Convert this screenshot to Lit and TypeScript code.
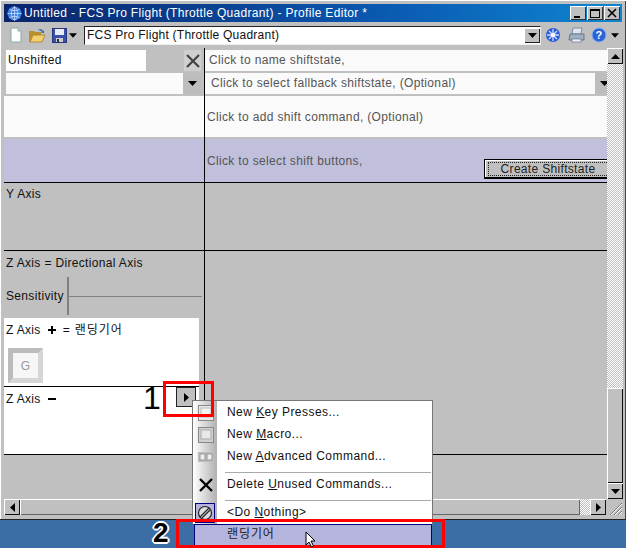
import { LitElement, html, css } from "lit";
import { customElement } from "lit/decorators.js";

const arrowDown = html`<svg width="9" height="5" viewBox="0 0 9 5"><path d="M0 0h9L4.500 5z" fill="#000"/></svg>`;
const arrowUp = html`<svg width="9" height="5" viewBox="0 0 9 5"><path d="M0 5h9L4.500 0z" fill="#000"/></svg>`;
const arrowRight = html`<svg width="5" height="9" viewBox="0 0 5 9"><path d="M0 0v9L5 4.500z" fill="#000"/></svg>`;
const arrowLeft = html`<svg width="5" height="9" viewBox="0 0 5 9"><path d="M5 0v9L0 4.500z" fill="#000"/></svg>`;
const cross = html`<svg width="14" height="14" viewBox="0 0 14 14"><path d="M1 1l12 12M13 1L1 13" stroke="#444" stroke-width="2.200" fill="none"/></svg>`;

@customElement("app-root")
export class AppRoot extends LitElement {
  static styles = css`
    :host { display: block; position: relative; width: 626px; height: 548px; overflow: hidden; background: #3a6ea5;
      font: 12px/14px "Liberation Sans", "Noto Sans CJK KR", sans-serif; letter-spacing: .34px; color: #111; }
    .window { box-sizing: border-box; height: 520px; background: #c0c0c0; padding: 4px 4px 4px 4px;
      border-bottom: 1px solid #222; box-shadow: inset 1px 1px 0 #fff, inset -1px 0 0 #444, inset -3px -1px 0 #c0c0c0; display: flex; flex-direction: column; }
    .title { height: 18px; flex: none; display: flex; align-items: center; background: linear-gradient(90deg, #0a246a, #0a58b0 60%, #0f85d0); color: #fff; letter-spacing: .32px; padding: 0 2px 0 3px; gap: 2px; }
    .title .name { flex: 1; }
    .wbtns { display: flex; gap: 1px; }
    .wbtn { width: 16px; height: 14px; background: #c0c0c0; box-shadow: inset 1px 1px 0 #fff, inset -1px -1px 0 #333; display: flex; align-items: center; justify-content: center; }
    .toolbar { height: 26px; flex: none; display: flex; align-items: center; padding-left: 3px; }
    .tool { width: 18px; height: 18px; display: flex; align-items: center; justify-content: center; flex: none; }
    .t2 { margin-left: 3px; }
    .t3 { margin-left: 4px; }
    .t5 { margin-left: 5px; }
    .dd { width: 8px; margin-right: 3px; display: flex; justify-content: center; flex: none; margin-left: 1px; }
    .dd.last { margin-left: 3px; }
    .combo { box-sizing: border-box; width: 457px; height: 19px; background: #fff; border: 1px solid; border-color: #222 #eee #eee #222; display: flex; align-items: center; letter-spacing: .24px; padding-left: 2px; flex: none; margin-right: 3px; margin-left: 4px; }
    .combo span { flex: 1; }
    .combo .cbtn { width: 16px; height: 15px; background: #c0c0c0; box-shadow: inset 1px 1px 0 #fff, inset -1px -1px 0 #222; display: flex; align-items: center; justify-content: center; }
    .main { flex: 1; display: flex; min-height: 0; }
    .panes { width: 603px; flex: none; display: flex; flex-direction: column; }
    .grid { flex: 1; display: grid; grid-template-columns: 201px 1fr; min-height: 0; }
    .left { border-right: 1px solid #000; display: flex; flex-direction: column; }
    .right { display: flex; flex-direction: column; overflow: hidden; }
    .r1 { height: 23px; display: flex; align-items: flex-end; box-sizing: border-box; flex: none; }
    .inp { width: 140px; height: 21px; margin-left: 2px; background: #fff; display: flex; align-items: center; padding: 0 0 2px 2px; box-sizing: border-box; }
    .xbtn { margin-left: 38px; width: 17px; height: 21px; display: flex; align-items: center; justify-content: center; background: #cfcfcf; }
    .r2 { height: 21px; margin-top: 2px; margin-left: 2px; background: #fafafa; display: flex; justify-content: flex-end; width: 195px; flex: none; }
    .sel { width: 18px; height: 21px; background: #bdbdbd; display: flex; align-items: center; justify-content: center; flex: none; }
    .r3 { height: 41px; margin-top: 2px; background: #fafafa; flex: none; }
    .r4 { height: 43px; margin-top: 2px; background: #c0c0dc; border-bottom: 1px solid #000; flex: none; }
    .yaxis { height: 68px; border-bottom: 1px solid #000; padding: 4px 2px; box-sizing: border-box; flex: none; }
    .zaxis { flex: none; padding: 5px 2px 0; height: 67px; box-sizing: border-box; }
    .sens { display: flex; align-items: center; height: 38px; margin-top: 7px; }
    .sens i { width: 2px; height: 38px; background: #808080; margin-left: 3px; flex: none; }
    .sens b { height: 1px; width: 133px; background: #808080; }
    .card { background: #fff; width: 195px; box-sizing: border-box; padding: 5px 2px; flex: none; }
    .c1 { height: 69px; border-bottom: 1px solid #000; }
    .c2 { height: 67px; position: relative; }
    .axis { display: flex; align-items: center; gap: 6px; }
    .ko { letter-spacing: .9px; }
    .key { width: 35px; height: 35px; margin-top: 11px; box-sizing: border-box; margin-left: 2px; border: 5px solid; border-color: #bcbcbc #d6d6d6 #d6d6d6 #bcbcbc; background: #f6f6f6; color: #999; display: flex; align-items: center; justify-content: center; }
    .rowline { height: 1px; background: #000; flex: none; }
    .rest { flex: 1; }
    .rtext { color: #555; padding-left: 2px; display: flex; align-items: center; box-sizing: border-box; flex: none; }
    .rr1 { height: 21px; margin-top: 2px; background: #fafafa; padding: 0 0 2px 4px; }
    .rr2 { height: 21px; margin-top: 2px; background: #fafafa; padding: 0 0 0 6px; justify-content: space-between; }
    .rr2 span { padding-bottom: 2px; }
    .rr2 .sel { margin-right: -6px; }
    .rr3 { height: 41px; margin-top: 2px; background: #fafafa; }
    .rr4 { height: 44px; margin-top: 2px; background: #c0c0dc; border-bottom: 1px solid #000; position: relative; }
    .create { position: absolute; left: 279px; top: 20px; width: 123px; height: 20px; box-sizing: border-box; background: #c0c0c0; border: 1px solid #000; border-bottom-width: 2px; border-right: 0; box-shadow: inset 1px 1px 0 #fff; color: #222; display: flex; align-items: center; justify-content: flex-start; padding-left: 3px; letter-spacing: .32px; }
    .create span { box-sizing: border-box; width: 122px; border: 1px dotted #222; border-right: 0; text-align: center; line-height: 12px; }
    .ry { height: 67px; border-bottom: 1px solid #000; flex: none; }
    .rz { flex: none; height: 203px; border-bottom: 1px solid #000; }
    .vscroll { width: 16px; flex: none; display: flex; flex-direction: column; }
    .sb { width: 16px; height: 16px; flex: none; background: #c0c0c0; box-sizing: border-box; box-shadow: inset 1px 1px 0 #fff, inset -1px -1px 0 #111; display: flex; align-items: center; justify-content: center; }
    .check { background: repeating-conic-gradient(#fff 0 25%, #c0c0c0 0 50%) 0 0 / 2px 2px; }
    .vtrack { height: 324px; flex: none; }
    .vthumb { flex: 1; box-shadow: inset 1px 1px 0 #fff, inset -1px -1px 0 #111; background: #c0c0c0; }
    .hscroll { height: 16px; flex: none; display: flex; }
    .hthumb { flex: 1; box-shadow: inset 1px 1px 0 #fff, inset -1px -1px 0 #666; background: #c0c0c0; }
    .htrack { width: 10px; }
    .grip { width: 16px; display: flex; align-items: flex-end; justify-content: flex-end; flex: none; }
    .menu { position: absolute; left: 192px; top: 400px; width: 241px; height: 124px; box-sizing: border-box; background: #fff; border: 1px solid #777; border-bottom: 0; z-index: 2; }
    .gut { position: absolute; left: 0; top: 0; bottom: 0; width: 24px; background: linear-gradient(90deg, #fff, #b0b0b0); }
    .mi { position: absolute; left: 34px; white-space: pre; color: #111; letter-spacing: .45px; }
    .mi u { text-underline-offset: 1px; }
    .msep { position: absolute; left: 32px; right: 1px; height: 1px; background: #aaa; }
    .mic { position: absolute; left: 3px; width: 20px; height: 20px; display: flex; align-items: center; justify-content: center; }
    .mic.sel2 { left: 2px; box-sizing: border-box; border: 1px solid #000080; background: #b4b4dc; }
    .hl { position: absolute; left: 194px; top: 524px; width: 238px; height: 22px; box-sizing: border-box; background: #b4b4dc; border: 1px solid #000080; padding: 2px 0 0 32px; z-index: 2; color: #222; letter-spacing: .9px; }
    .redbox { position: absolute; box-sizing: border-box; border: 3px solid #f00; z-index: 3; }
    .num { position: absolute; z-index: 3; font-family: "Liberation Sans", sans-serif; font-size: 32px; line-height: 26px; letter-spacing: 0; color: #000; }
    .num.two { font-weight: 700; font-size: 28px; text-shadow: 2px 0 #fff, -2px 0 #fff, 0 2px #fff, 0 -2px #fff, 1px 1px #fff, -1px -1px #fff, 1px -1px #fff, -1px 1px #fff; }
    .arrowbtn { position: absolute; left: 176px; top: 387px; width: 20px; height: 20px; box-sizing: border-box; background: #c0c0c0; border: 1px solid #222; display: flex; align-items: center; justify-content: center; z-index: 1; }
    .cursor { position: absolute; left: 305px; top: 531px; z-index: 4; }
  `;

  private globe() {
    return html`<svg width="15" height="15" viewBox="0 0 16 16"><circle cx="8" cy="8" r="7.500" fill="#3a80e0"/><path d="M8 .5v15M.5 8h15M2.500 3.500c3.500 2 7.500 2 11 0M2.500 12.500c3.500-2 7.500-2 11 0M8 .5c-4.500 3.500-4.500 11.500 0 15M8 .5c4.500 3.500 4.500 11.500 0 15" stroke="#cfe0ff" stroke-width=".8" fill="none"/></svg>`;
  }

  render() {
    return html`
      <div class="window">
        <div class="title">
          ${this.globe()}
          <span class="name">Untitled - FCS Pro Flight (Throttle Quadrant) - Profile Editor *</span>
          <div class="wbtns">
            <div class="wbtn"><svg width="10" height="10"><rect x="1" y="8" width="6" height="2" fill="#000"/></svg></div>
            <div class="wbtn"><svg width="10" height="10"><rect x=".5" y="1.500" width="9" height="8" fill="none" stroke="#000"/><rect y="1" width="10" height="2" fill="#000"/></svg></div>
            <div class="wbtn"><svg width="10" height="10"><path d="M1 1l8 8M9 1L1 9" stroke="#000" stroke-width="1.600"/></svg></div>
          </div>
        </div>
        <div class="toolbar">
          <div class="tool"><svg width="14" height="16" viewBox="0 0 14 16"><path d="M2 1h7l3 3v11H2z" fill="#fff" stroke="#8aa" /><path d="M9 1v3h3" fill="#dde" stroke="#8aa"/></svg></div>
          <div class="tool t2"><svg width="18" height="15" viewBox="0 0 18 15"><path d="M1 3h5l1 1h6v3H5l-3 7H1z" fill="#b8902c"/><path d="M2 14l3-7h12l-3 7z" fill="#f0d070" stroke="#a88020" stroke-width=".8"/><path d="M10 2c2-2 4-1 5 1l1-1v3h-3l1-1c-1-1-2-2-4-2" fill="#3a70c0"/></svg></div>
          <div class="tool t3"><svg width="15" height="15" viewBox="0 0 15 15"><rect x=".5" y=".5" width="14" height="14" fill="#3a50a8" stroke="#26367c"/><rect x="3" y="1" width="9" height="6" fill="#e8ecf8"/><rect x="4" y="10" width="7" height="4" fill="#ccc"/><rect x="5" y="11" width="2" height="3" fill="#333"/></svg></div>
          <div class="dd">${arrowDown}</div>
          <div class="combo"><span>FCS Pro Flight (Throttle Quadrant)</span><div class="cbtn">${arrowDown}</div></div>
          <div class="tool"><svg width="16" height="16" viewBox="0 0 16 16"><circle cx="8" cy="8" r="7" fill="#2a5ad8"/><path d="M8 2v12M2 8h12M4 4l8 8M12 4l-8 8" stroke="#cfe0ff" stroke-width="1.300"/><circle cx="8" cy="8" r="2" fill="#fff"/></svg></div>
          <div class="tool t5"><svg width="17" height="16" viewBox="0 0 17 16"><path d="M5 1h9l-1 6H4z" fill="#dfe6f0" stroke="#6a7a90" stroke-width=".8"/><path d="M2 7h14v6H1z" fill="#9eb0c4" stroke="#5a6a80" stroke-width=".8"/><rect x="4" y="12" width="9" height="3" fill="#e8eef4" stroke="#5a6a80" stroke-width=".6"/></svg></div>
          <div class="tool t5"><svg width="16" height="16" viewBox="0 0 16 16"><circle cx="8" cy="8" r="7" fill="#2a62d8" stroke="#8ab0f0"/><text x="8" y="12" font-size="11" font-weight="700" fill="#fff" text-anchor="middle" font-family="Liberation Sans">?</text></svg></div>
          <div class="dd last">${arrowDown}</div>
        </div>
        <div class="main">
          <div class="panes">
            <div class="grid">
              <div class="left">
                <div class="r1"><div class="inp">Unshifted</div><div class="xbtn">${cross}</div></div>
                <div class="r2"><div class="sel">${arrowDown}</div></div>
                <div class="r3"></div>
                <div class="r4"></div>
                <div class="yaxis">Y Axis</div>
                <div class="zaxis">Z Axis = Directional Axis
                  <div class="sens"><span>Sensitivity</span><i></i><b></b></div>
                </div>
                <div class="card c1">
                  <div class="axis"><span>Z Axis</span><svg width="10" height="10"><path d="M5 1v8M1 5h8" stroke="#000" stroke-width="2"/></svg><span class="ko">= 랜딩기어</span></div>
                  <div class="key">G</div>
                </div>
                <div class="card c2">
                  <div class="axis"><span>Z Axis</span><svg width="10" height="10"><path d="M1 5h8" stroke="#000" stroke-width="2"/></svg></div>
                </div>
                <div class="rowline"></div>
                <div class="rest"></div>
              </div>
              <div class="right">
                <div class="rtext rr1">Click to name shiftstate,</div>
                <div class="rtext rr2"><span>Click to select fallback shiftstate, (Optional)</span><div class="sel">${arrowDown}</div></div>
                <div class="rtext rr3">Click to add shift command, (Optional)</div>
                <div class="rtext rr4"><span>Click to select shift buttons,</span><div class="create"><span>Create Shiftstate</span></div></div>
                <div class="ry"></div>
                <div class="rz"></div>
              </div>
            </div>
          </div>
          <div class="vscroll">
            <div class="sb">${arrowUp}</div>
            <div class="vtrack check"></div>
            <div class="vthumb"></div>
            <div class="sb">${arrowDown}</div>
          </div>
        </div>
        <div class="hscroll">
          <div class="sb">${arrowLeft}</div>
          <div class="hthumb"></div>
          <div class="htrack check"></div>
          <div class="sb">${arrowRight}</div>
          <div class="grip"><svg width="13" height="13" viewBox="0 0 13 13"><path d="M13 1L1 13M13 5L5 13M13 9L9 13" stroke="#777" fill="none"/><path d="M13 2L2 13M13 6L6 13M13 10L10 13" stroke="#fff" fill="none"/></svg></div>
        </div>
      </div>

      <div class="arrowbtn">${arrowRight}</div>
      <div class="menu">
        <div class="gut"></div>
        <div class="mic" style="top:2px"><svg width="16" height="16"><rect x=".5" y=".5" width="15" height="15" fill="#e8e8e8" stroke="#888"/><rect x="3" y="3" width="10" height="9" fill="#f4f4f4" stroke="#bbb"/></svg></div>
        <div class="mi" style="top:4px">New <u>K</u>ey Presses...</div>
        <div class="mic" style="top:24px"><svg width="16" height="16"><rect x=".5" y=".5" width="15" height="15" fill="#d0d0d0" stroke="#888"/><rect x="3" y="3" width="10" height="9" fill="#e8e8e8" stroke="#aaa"/></svg></div>
        <div class="mi" style="top:26px">New <u>M</u>acro...</div>
        <div class="mic" style="top:46px"><svg width="16" height="10"><rect width="16" height="10" fill="#bbb"/><rect x="2" y="2" width="5" height="6" fill="#eee" stroke="#999"/><rect x="9" y="2" width="5" height="6" fill="#eee" stroke="#999"/></svg></div>
        <div class="mi" style="top:48px">New <u>A</u>dvanced Command...</div>
        <div class="msep" style="top:71px"></div>
        <div class="mic" style="top:74px"><svg width="14" height="14"><path d="M1 1l12 12M13 1L1 13" stroke="#000" stroke-width="2.400"/></svg></div>
        <div class="mi" style="top:76px">Delete <u>U</u>nused Commands...</div>
        <div class="msep" style="top:99px"></div>
        <div class="mic sel2" style="top:102px"><svg width="16" height="16"><circle cx="8" cy="8" r="6.500" fill="#ddd" stroke="#222" stroke-width="1.200"/><path d="M3 12L12 3M5 13L13 5" stroke="#222" stroke-width="1.200"/></svg></div>
        <div class="mi" style="top:104px">&lt;Do <u>N</u>othing&gt;</div>
      </div>
      <div class="hl">랜딩기어</div>

      <div class="redbox" style="left:163px;top:381px;width:51px;height:36px"></div>
      <div class="redbox" style="left:176px;top:519px;width:269px;height:29px"></div>
      <div class="num" style="left:143px;top:385px">1</div>
      <div class="num two" style="left:153px;top:520px">2</div>
      <svg class="cursor" width="12" height="17" viewBox="0 0 12 17"><path d="M1 1v13l3-3 2.500 5 2-1-2.500-5h4z" fill="#fff" stroke="#000"/></svg>
    `;
  }
}
